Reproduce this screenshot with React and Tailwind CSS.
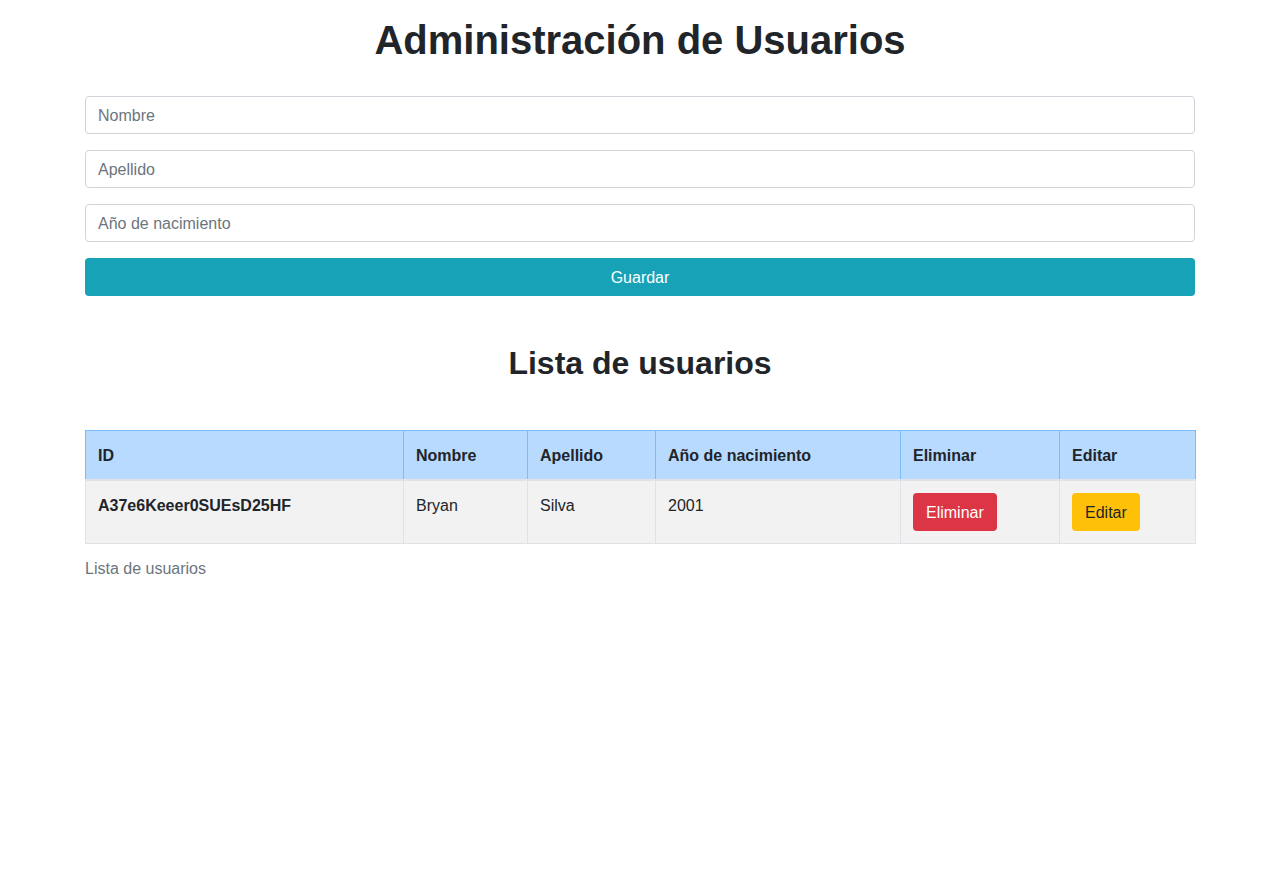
import React from "react";

const USERS = [
  { id: "A37e6Keeer0SUEsD25HF", nombre: "Bryan", apellido: "Silva", anio: "2001" },
];

const COLS = [
  { label: "ID", w: "w-[318px]" },
  { label: "Nombre", w: "w-[124px]" },
  { label: "Apellido", w: "w-[128px]" },
  { label: "Año de nacimiento", w: "w-[245px]" },
  { label: "Eliminar", w: "w-[159px]" },
  { label: "Editar", w: "w-[136px]" },
];

function Field({ placeholder }) {
  return (
    <input
      type="text"
      placeholder={placeholder}
      className="block w-full h-[38px] px-3 pt-[2px] border border-[#ced4da] rounded text-base text-[#495057] placeholder:text-[#6c757d] bg-white outline-none"
    />
  );
}

export default function App() {
  return (
    <div className="min-h-screen bg-white text-[#212529] text-base font-['Liberation_Sans',Arial,sans-serif]">
      <div className="w-[1110px] mx-auto">
        <h1 className="pt-4 mb-8 text-[40px] leading-[48px] font-bold text-center">
          Administración de Usuarios
        </h1>

        <form className="flex flex-col gap-4" onSubmit={(e) => e.preventDefault()}>
          <Field placeholder="Nombre" />
          <Field placeholder="Apellido" />
          <Field placeholder="Año de nacimiento" />
          <button
            type="submit"
            className="h-[38px] w-full pt-[2px] rounded bg-[#17a2b8] text-white text-base"
          >
            Guardar
          </button>
        </form>

        <h2 className="mt-[48px] text-[32px] leading-[38px] font-bold text-center">
          Lista de usuarios
        </h2>

        <table className="mt-[48px] w-full border-collapse table-fixed caption-bottom">
          <caption className="pt-[13px] pb-[11px] text-left text-[#6c757d]">Lista de usuarios</caption>
          <thead>
            <tr className="bg-[#b8daff]">
              {COLS.map((c) => (
                <th
                  key={c.label}
                  className={`${c.w} px-3 pt-[13px] pb-[11px] leading-6 text-left font-bold border border-[#7abaff] border-b-2 border-b-[#dee2e6]`}
                >
                  {c.label}
                </th>
              ))}
            </tr>
          </thead>
          <tbody>
            {USERS.map((u) => (
              <tr key={u.id} className="bg-[#f2f2f2]">
                <th className="px-3 pt-[13px] pb-[11px] leading-6 text-left align-top font-bold border border-[#dee2e6]">
                  {u.id}
                </th>
                <td className="px-3 pt-[13px] pb-[11px] leading-6 align-top border border-[#dee2e6]">{u.nombre}</td>
                <td className="px-3 pt-[13px] pb-[11px] leading-6 align-top border border-[#dee2e6]">{u.apellido}</td>
                <td className="px-3 pt-[13px] pb-[11px] leading-6 align-top border border-[#dee2e6]">{u.anio}</td>
                <td className="px-3 py-3 leading-6 align-top border border-[#dee2e6]">
                  <button className="h-[38px] px-[13px] pt-[2px] rounded bg-[#dc3545] text-white">Eliminar</button>
                </td>
                <td className="px-3 py-3 leading-6 align-top border border-[#dee2e6]">
                  <button className="h-[38px] px-[13px] pt-[2px] rounded bg-[#ffc107] text-[#212529]">Editar</button>
                </td>
              </tr>
            ))}
          </tbody>
        </table>
      </div>
    </div>
  );
}
